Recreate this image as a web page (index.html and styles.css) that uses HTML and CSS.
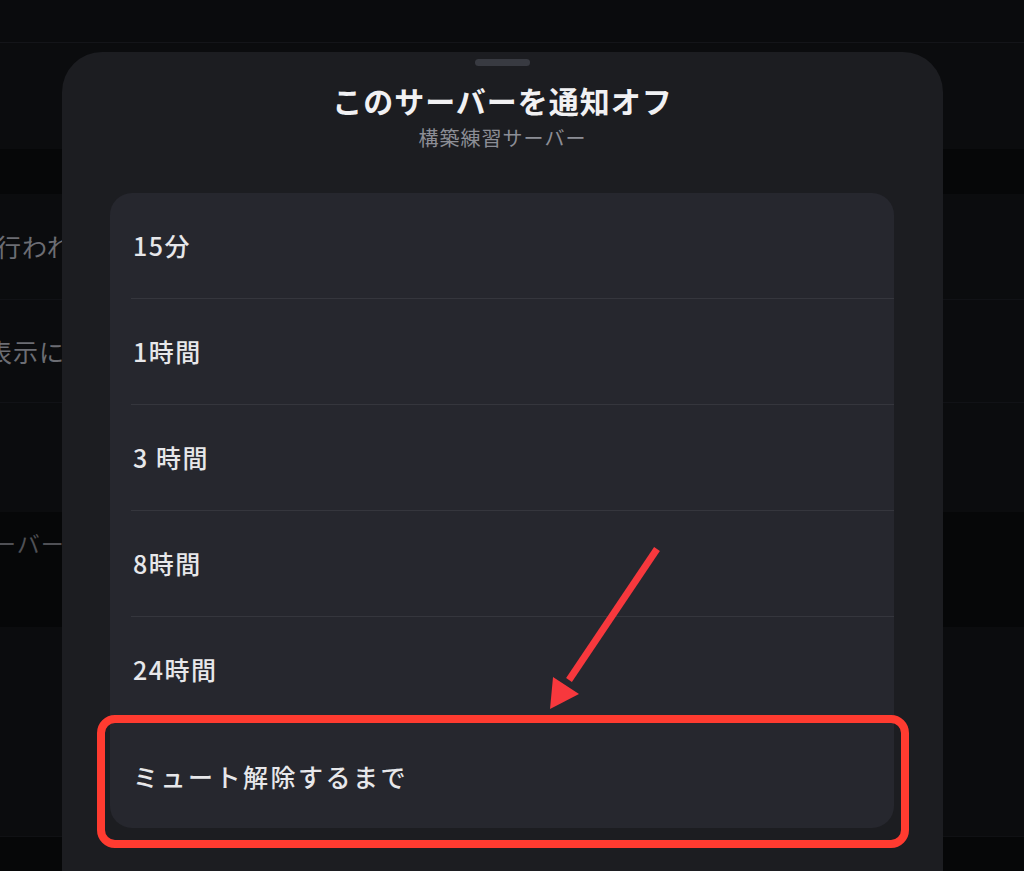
FILE: index.html
```html
<!DOCTYPE html>
<html lang="ja">
<head>
<meta charset="utf-8">
<title>このサーバーを通知オフ</title>
<link rel="stylesheet" href="styles.css">
</head>
<body>
<div class="bg">
  <div class="bg-top"></div>
  <div class="bg-head"></div>
  <div class="bg-dark bg-gap"></div>
  <div class="bg-row r1"><span class="bg-text">行われ</span></div>
  <div class="bg-row r2"><span class="bg-text">表示に</span></div>
  <div class="bg-row r3"></div>
  <div class="bg-dark bg-sect"><span class="bg-text dim">サーバー</span></div>
  <div class="bg-row r4"></div>
  <div class="bg-dark bg-end"></div>
</div>

<div class="sheet">
  <div class="handle"></div>
  <h1 class="title">このサーバーを通知オフ</h1>
  <div class="subtitle">構築練習サーバー</div>
  <ul class="options">
    <li class="opt">15分</li>
    <li class="opt">1時間</li>
    <li class="opt">3 時間</li>
    <li class="opt">8時間</li>
    <li class="opt">24時間</li>
    <li class="opt last">ミュート解除するまで</li>
  </ul>
</div>

<div class="highlight"></div>
<svg class="arrow" width="1024" height="871" viewBox="0 0 1024 871">
  <line x1="657" y1="549" x2="569" y2="680" stroke="#f7383d" stroke-width="7" stroke-linecap="butt"/>
  <polygon points="550,709 553,677 579,694" fill="#f7383d"/>
</svg>
</body>
</html>
```

FILE: styles.css
```css
* { box-sizing: border-box; }
html, body {
  margin: 0;
  padding: 0;
  width: 1024px;
  height: 871px;
  overflow: hidden;
  background: #0b0c0e;
  font-family: "Noto Sans CJK JP", "Noto Sans", sans-serif;
}
.bg {
  display: flex;
  flex-direction: column;
  width: 1024px;
  height: 871px;
}
.bg-top {
  height: 43px;
  background: #0a0b0d;
  border-bottom: 1px solid #141519;
}
.bg-head { height: 106px; background: #0b0c0e; }
.bg-dark { background: #060708; }
.bg-gap { height: 45px; }
.bg-row {
  display: flex;
  align-items: center;
  border-bottom: 1px solid #111216;
  background: #0b0c0e;
}
.r1 { height: 106px; }
.r2 { height: 103px; }
.r3 { height: 109px; border-bottom: none; }
.r4 { height: 210px; border-bottom: 1px solid #101114; }
.bg-sect {
  height: 115px;
  display: flex;
  align-items: flex-start;
  padding-top: 14px;
}
.bg-end { flex: 1; }
.bg-text {
  margin-left: -8px;
  font-size: 25px;
  color: #6c6d73;
  letter-spacing: 1px;
}
.bg-text.dim {
  margin-left: -31px;
  color: #4f5055;
  font-size: 23px;
}
.r1 .bg-text { margin-left: -4px; padding-bottom: 2px; }
.r2 .bg-text { margin-left: -13px; }

.sheet {
  position: absolute;
  left: 62px;
  top: 52px;
  width: 881px;
  height: 860px;
  background: #1c1d21;
  border-radius: 40px 40px 0 0;
  display: flex;
  flex-direction: column;
  align-items: center;
  padding-top: 7px;
}
.handle {
  width: 55px;
  height: 7px;
  border-radius: 4px;
  background: #383a41;
}
.title {
  margin: 15px 0 0;
  font-size: 30px;
  line-height: 38px;
  font-weight: 700;
  color: #f1f1f3;
  letter-spacing: 1px;
}
.subtitle {
  margin-top: 6px;
  font-size: 20px;
  line-height: 26px;
  color: #8c8e96;
  letter-spacing: 1px;
}
.options {
  list-style: none;
  margin: 42px 0 0;
  padding: 0;
  width: 784px;
  margin-left: -1px;
  background: #26272e;
  border-radius: 22px;
  overflow: hidden;
}
.opt {
  height: 106px;
  margin-left: 21px;
  padding-left: 2px;
  display: flex;
  align-items: center;
  font-size: 25px;
  font-weight: 500;
  letter-spacing: 1.5px;
  color: #e7e7ea;
  border-bottom: 1px solid #35363d;
  padding-bottom: 2px;
}
.opt.last {
  border-bottom: none;
  letter-spacing: 2.5px;
  padding-top: 2px;
  height: 105px;
}

.highlight {
  position: absolute;
  left: 97px;
  top: 715px;
  width: 812px;
  height: 133px;
  border: 8px solid #ff3b30;
  border-radius: 18px;
}
.arrow {
  position: absolute;
  left: 0;
  top: 0;
}
```
